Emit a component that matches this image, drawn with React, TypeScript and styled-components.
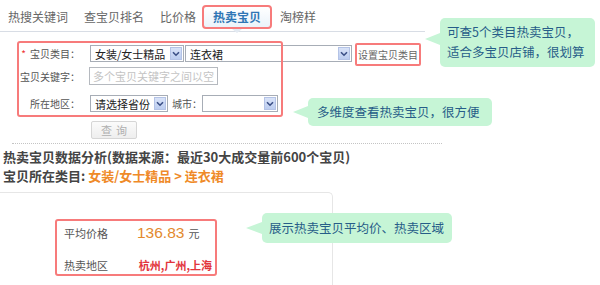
import React from "react";
import styled, { createGlobalStyle } from "styled-components";

const GlobalStyle = createGlobalStyle`
  html, body { margin: 0; padding: 0; background: #fff; }
  body { font-family: "Noto Sans CJK SC", "Noto Sans", sans-serif; color: #555; }
  * { box-sizing: border-box; }
`;

const GREEN = "#c6f5d6";
const GREEN_TEXT = "#265d88";
const RED_LINE = "#f77b7b";

const Page = styled.div`
  position: relative;
  width: 600px;
  height: 285px;
  overflow: hidden;
  display: flex;
  flex-direction: column;
`;

const TabBar = styled.div`
  display: flex;
  align-items: stretch;
  width: 425px;
  height: 32px;
  padding: 5px 0 2px 0;
  border-bottom: 1px solid #d8dde5;
`;

const Tab = styled.div<{ $active?: boolean }>`
  position: relative;
  display: flex;
  align-items: center;
  font-size: 12px;
  line-height: 1;
  white-space: nowrap;
  padding: ${(p) => (p.$active ? "0 9px" : "0 8px")};
  margin-left: ${(p) => (p.$active ? "-2px" : "0")};
  color: ${(p) => (p.$active ? "#2f76b5" : "#666")};
  font-weight: ${(p) => (p.$active ? 700 : 400)};
  border: ${(p) => (p.$active ? `2px solid ${RED_LINE}` : "none")};
  border-radius: 4px;
  background: ${(p) => (p.$active ? "linear-gradient(#ffffff, #eaf3fa)" : "transparent")};
  &::after {
    content: "";
    display: ${(p) => (p.$active ? "block" : "none")};
    position: absolute;
    left: 50%;
    bottom: -6px;
    margin-left: -5px;
    width: 0;
    height: 0;
    border-left: 5px solid transparent;
    border-right: 5px solid transparent;
    border-top: 4px solid #e3eaf2;
  }
`;

const FormBox = styled.div`
  position: relative;
  margin: 9px 0 0 17px;
  width: 266px;
  height: 76px;
  padding: 4px 0 5px 0;
  display: flex;
  flex-direction: column;
  &::after {
    content: "";
    position: absolute;
    inset: 0;
    border: 2px solid ${RED_LINE};
    border-radius: 3px;
    pointer-events: none;
  }
`;

const Row = styled.div<{ $h: number; $mt?: number }>`
  display: flex;
  align-items: center;
  height: ${(p) => p.$h}px;
  margin-top: ${(p) => p.$mt ?? 0}px;
  flex-shrink: 0;
`;

const Label = styled.div`
  width: 63px;
  margin-right: 10px;
  flex-shrink: 0;
  text-align: right;
  font-size: 10px;
  color: #555;
  white-space: nowrap;
`;

const Star = styled.span`
  color: #e33;
  margin-right: 4px;
`;

const SelectBox = styled.div<{ $w: number; $ml?: number }>`
  flex-shrink: 0;
  width: ${(p) => p.$w}px;
  height: 17px;
  margin-left: ${(p) => p.$ml ?? 0}px;
  border: 1px solid #a7adb6;
  background: #fff;
  display: flex;
  align-items: center;
  justify-content: space-between;
  padding: 0 1px 0 4px;
  font-size: 11px;
  color: #222;
  white-space: nowrap;
`;

const Arrow = styled.span`
  width: 12px;
  height: 13px;
  background: linear-gradient(#d9e3f8, #bccdf0);
  border: 1px solid #b4c3e6;
  display: flex;
  align-items: center;
  justify-content: center;
`;

const TextInput = styled.input`
  flex-shrink: 0;
  width: 129px;
  height: 18px;
  margin-left: -1px;
  border: 1px solid #b5b9bf;
  padding: 0 3px;
  font-family: "Noto Sans CJK SC", sans-serif;
  font-size: 11px;
  color: #333;
  outline: none;
  &::placeholder { color: #c4c4c4; }
`;

const SmallText = styled.span`
  font-size: 10px;
  color: #555;
  margin-left: 4px;
  flex-shrink: 0;
  white-space: nowrap;
`;

const SetCategory = styled.div`
  flex-shrink: 0;
  margin-left: 3px;
  height: 23px;
  margin-top: 2px;
  padding: 0 1px;
  border: 2px solid ${RED_LINE};
  border-radius: 2px;
  display: flex;
  align-items: center;
  font-size: 10px;
  color: #666;
  white-space: nowrap;
`;

const QueryButton = styled.button`
  margin: 4px 0 0 91px;
  width: 46px;
  height: 18px;
  padding: 0;
  border: 1px solid #d6d6d6;
  border-radius: 2px;
  background: linear-gradient(#fbfbfb, #eeeeee);
  color: #b0b0b0;
  font-family: "Noto Sans CJK SC", sans-serif;
  font-size: 11px;
  letter-spacing: 4px;
  text-indent: 4px;
  line-height: 1;
`;

const Dotted = styled.div`
  margin: 4px 0 0 12px;
  width: 430px;
  border-top: 1px dotted #c4c4c4;
`;

const TitleBlock = styled.div`
  margin: 3px 0 0 3px;
  display: flex;
  flex-direction: column;
`;

const TitleLine = styled.div`
  font-size: 13px;
  line-height: 19px;
  height: 19px;
  font-weight: 700;
  color: #444;
  white-space: nowrap;
`;

const Orange = styled.span`
  color: #ef8a28;
`;

const Card = styled.div`
  margin-top: 7px;
  margin-left: -2px;
  width: 335px;
  flex: 1;
  border-top: 1px solid #e6e6e6;
  border-right: 1px solid #e6e6e6;
  border-top-right-radius: 5px;
  padding: 26px 0 0 57px;
`;

const StatBox = styled.div`
  width: 162px;
  height: 57px;
  border: 2px solid ${RED_LINE};
  border-radius: 3px;
  padding: 0 3px 0 7px;
  display: flex;
  flex-direction: column;
  justify-content: space-between;
`;

const StatRow = styled.div<{ $h: number }>`
  display: flex;
  align-items: center;
  height: ${(p) => p.$h}px;
`;

const StatLabel = styled.span`
  font-size: 11px;
  color: #555;
  width: 73px;
  flex-shrink: 0;
`;

const Price = styled.span`
  font-family: "Liberation Sans", Arial, sans-serif;
  font-size: 15.5px;
  color: #e38a2e;
`;

const Unit = styled.span`
  font-size: 11px;
  color: #555;
  margin-left: 4px;
`;

const HotArea = styled.span`
  margin-left: auto;
  font-size: 11px;
  font-weight: 700;
  color: #e2353c;
  white-space: nowrap;
`;

const Callout = styled.div<{ $x: number; $y: number; $w: number; $h: number; $tail: number; $tip: number; $pt?: number; $pl?: number }>`
  position: absolute;
  left: ${(p) => p.$x}px;
  top: ${(p) => p.$y}px;
  width: ${(p) => p.$w}px;
  height: ${(p) => p.$h}px;
  background: ${GREEN};
  border-radius: 5px;
  color: ${GREEN_TEXT};
  font-size: 12.5px;
  line-height: 20px;
  padding: ${(p) => p.$pt ?? 4}px 0 0 ${(p) => p.$pl ?? 7}px;
  white-space: nowrap;
  &::before {
    content: "";
    position: absolute;
    left: -${(p) => p.$tail}px;
    top: ${(p) => p.$tip - 6}px;
    width: 0;
    height: 0;
    border-top: 6px solid transparent;
    border-bottom: 6px solid transparent;
    border-right: ${(p) => p.$tail}px solid ${GREEN};
  }
`;

const Chevron = () => (
  <svg width="8" height="6" viewBox="0 0 8 6">
    <path d="M1 1.2 L4 4.2 L7 1.2" fill="none" stroke="#3b4f86" strokeWidth="1.6" />
  </svg>
);

const FakeSelect: React.FC<{ w: number; ml?: number; text?: string }> = ({ w, ml, text }) => (
  <SelectBox $w={w} $ml={ml}>
    <span>{text ?? ""}</span>
    <Arrow>
      <Chevron />
    </Arrow>
  </SelectBox>
);

const tabs = ["热搜关键词", "查宝贝排名", "比价格", "热卖宝贝", "淘榜样"];

export default function App() {
  return (
    <>
      <GlobalStyle />
      <Page>
        <TabBar>
          {tabs.map((t) => (
            <Tab key={t} $active={t === "热卖宝贝"}>
              {t}
            </Tab>
          ))}
        </TabBar>

        <FormBox>
          <Row $h={17}>
            <Label>
              <Star>*</Star>宝贝类目：
            </Label>
            <FakeSelect w={94} text="女装/女士精品" />
            <FakeSelect w={167} ml={1} text="连衣裙" />
            <SetCategory>设置宝贝类目</SetCategory>
          </Row>
          <Row $h={18} $mt={5}>
            <Label>宝贝关键字：</Label>
            <TextInput placeholder="多个宝贝关键字之间以空格分隔" />
          </Row>
          <Row $h={17} $mt={10}>
            <Label>所在地区：</Label>
            <FakeSelect w={78} text="请选择省份" />
            <SmallText>城市：</SmallText>
            <FakeSelect w={76} />
          </Row>
        </FormBox>

        <QueryButton disabled>查询</QueryButton>
        <Dotted />

        <TitleBlock>
          <TitleLine>热卖宝贝数据分析(数据来源：最近30大成交量前600个宝贝)</TitleLine>
          <TitleLine>
            宝贝所在类目: <Orange>女装/女士精品 &gt; 连衣裙</Orange>
          </TitleLine>
        </TitleBlock>

        <Card>
          <StatBox>
            <StatRow $h={24}>
              <StatLabel>平均价格</StatLabel>
              <Price>136.83</Price>
              <Unit>元</Unit>
            </StatRow>
            <StatRow $h={18}>
              <StatLabel>热卖地区</StatLabel>
              <HotArea>杭州,广州,上海</HotArea>
            </StatRow>
          </StatBox>
        </Card>

        <Callout $x={440} $y={18} $w={155} $h={49} $tail={15} $tip={21}>
          可查5个类目热卖宝贝，
          <br />
          适合多宝贝店铺，很划算
        </Callout>
        <Callout $x={308} $y={98} $w={184} $h={28} $tail={15} $tip={14} $pl={9}>
          多维度查看热卖宝贝，很方便
        </Callout>
        <Callout $x={262} $y={213} $w={190} $h={30} $tail={16} $tip={15} $pt={5}>
          展示热卖宝贝平均价、热卖区域
        </Callout>
      </Page>
    </>
  );
}
